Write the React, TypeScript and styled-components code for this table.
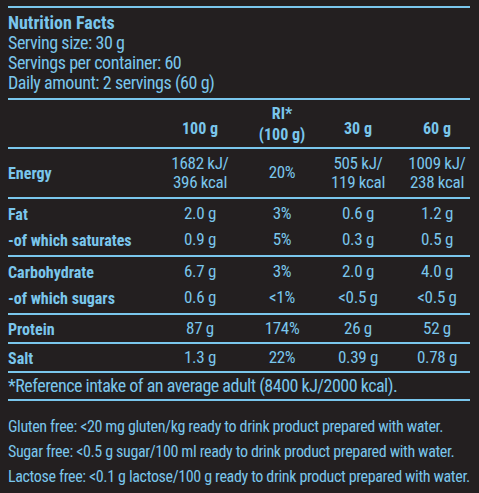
import React from "react";
import styled, { createGlobalStyle } from "styled-components";

const GlobalStyle = createGlobalStyle`
  html, body {
    margin: 0;
    padding: 0;
    background: #231f20;
  }
`;

const Label = styled.div`
  width: 462px;
  margin-left: 8px;
  padding-top: 6px;
  color: #7ac6ec;
  font-family: Roboto, "Liberation Sans", sans-serif;
  font-stretch: condensed;
`;

const Intro = styled.div`
  border-top: 2px solid #7ac6ec;
  border-bottom: 2px solid #7ac6ec;
  padding: 4px 0 5px;
  font-size: 18px;
  line-height: 20px;
  letter-spacing: -0.45px;
`;

const Title = styled.div`
  font-weight: bold;
  line-height: 21px;
  letter-spacing: 0;
`;

const Section = styled.div<{ $pad?: string }>`
  border-bottom: 2px solid #7ac6ec;
  padding: ${(p) => p.$pad || "2px 0"};
`;

const Row = styled.div<{ $h: number }>`
  display: grid;
  grid-template-columns: 152px 80px 84px 68px 1fr;
  align-items: center;
  height: ${(p) => p.$h}px;
`;

const Name = styled.div`
  font-size: 16px;
  font-weight: bold;
`;

const Cell = styled.div<{ $last?: boolean; $head?: boolean; $shift?: number }>`
  text-align: center;
  font-size: ${(p) => (p.$head ? 16 : 17)}px;
  font-weight: ${(p) => (p.$head ? "bold" : "normal")};
  line-height: ${(p) => (p.$head ? 21 : 19.5)}px;
  letter-spacing: ${(p) => (p.$head ? 0 : -0.3)}px;
  padding-left: ${(p) => (p.$last ? 12 : 0)}px;
  padding-top: ${(p) => p.$shift || 0}px;
  white-space: nowrap;
`;

const Footnote = styled.div`
  border-bottom: 2px solid #7ac6ec;
  height: 26px;
  line-height: 26px;
  font-size: 18px;
  letter-spacing: -0.5px;
`;

const Notes = styled.div`
  padding-top: 13px;
  font-size: 16px;
  line-height: 25px;
  letter-spacing: -0.35px;
  white-space: nowrap;
`;

type Nutrient = {
  name: string;
  values: string[];
};

const groups: Nutrient[][] = [
  [
    { name: "Fat", values: ["2.0 g", "3%", "0.6 g", "1.2 g"] },
    { name: "-of which saturates", values: ["0.9 g", "5%", "0.3 g", "0.5 g"] },
  ],
  [
    { name: "Carbohydrate", values: ["6.7 g", "3%", "2.0 g", "4.0 g"] },
    { name: "-of which sugars", values: ["0.6 g", "<1%", "<0.5 g", "<0.5 g"] },
  ],
  [{ name: "Protein", values: ["87 g", "174%", "26 g", "52 g"] }],
  [{ name: "Salt", values: ["1.3 g", "22%", "0.39 g", "0.78 g"] }],
];

const App: React.FC = () => {
  return (
    <>
      <GlobalStyle />
      <Label>
        <Intro>
          <Title>Nutrition Facts</Title>
          <div>Serving size: 30 g</div>
          <div>Servings per container: 60</div>
          <div>Daily amount: 2 servings (60 g)</div>
        </Intro>

        <Section $pad="0">
          <Row $h={47}>
            <div />
            <Cell $head $shift={9}>100 g</Cell>
            <Cell $head>
              RI*
              <br />
              (100 g)
            </Cell>
            <Cell $head $shift={9}>30 g</Cell>
            <Cell $head $shift={9} $last>60 g</Cell>
          </Row>
        </Section>

        <Section $pad="0">
          <Row $h={48}>
            <Name>Energy</Name>
            <Cell>
              1682 kJ/
              <br />
              396 kcal
            </Cell>
            <Cell>20%</Cell>
            <Cell>
              505 kJ/
              <br />
              119 kcal
            </Cell>
            <Cell $last>
              1009 kJ/
              <br />
              238 kcal
            </Cell>
          </Row>
        </Section>

        {groups.map((group, i) => (
          <Section key={i} $pad={group.length > 1 ? "2px 0" : "1px 0 0"}>
            {group.map((n) => (
              <Row $h={26} key={n.name}>
                <Name>{n.name}</Name>
                {n.values.map((v, j) => (
                  <Cell key={j} $last={j === 3}>
                    {v}
                  </Cell>
                ))}
              </Row>
            ))}
          </Section>
        ))}

        <Footnote>*Reference intake of an average adult (8400 kJ/2000 kcal).</Footnote>

        <Notes>
          <div>Gluten free: &lt;20 mg gluten/kg ready to drink product prepared with water.</div>
          <div>Sugar free: &lt;0.5 g sugar/100 ml ready to drink product prepared with water.</div>
          <div>Lactose free: &lt;0.1 g lactose/100 g ready to drink product prepared with water.</div>
        </Notes>
      </Label>
    </>
  );
};

export default App;
